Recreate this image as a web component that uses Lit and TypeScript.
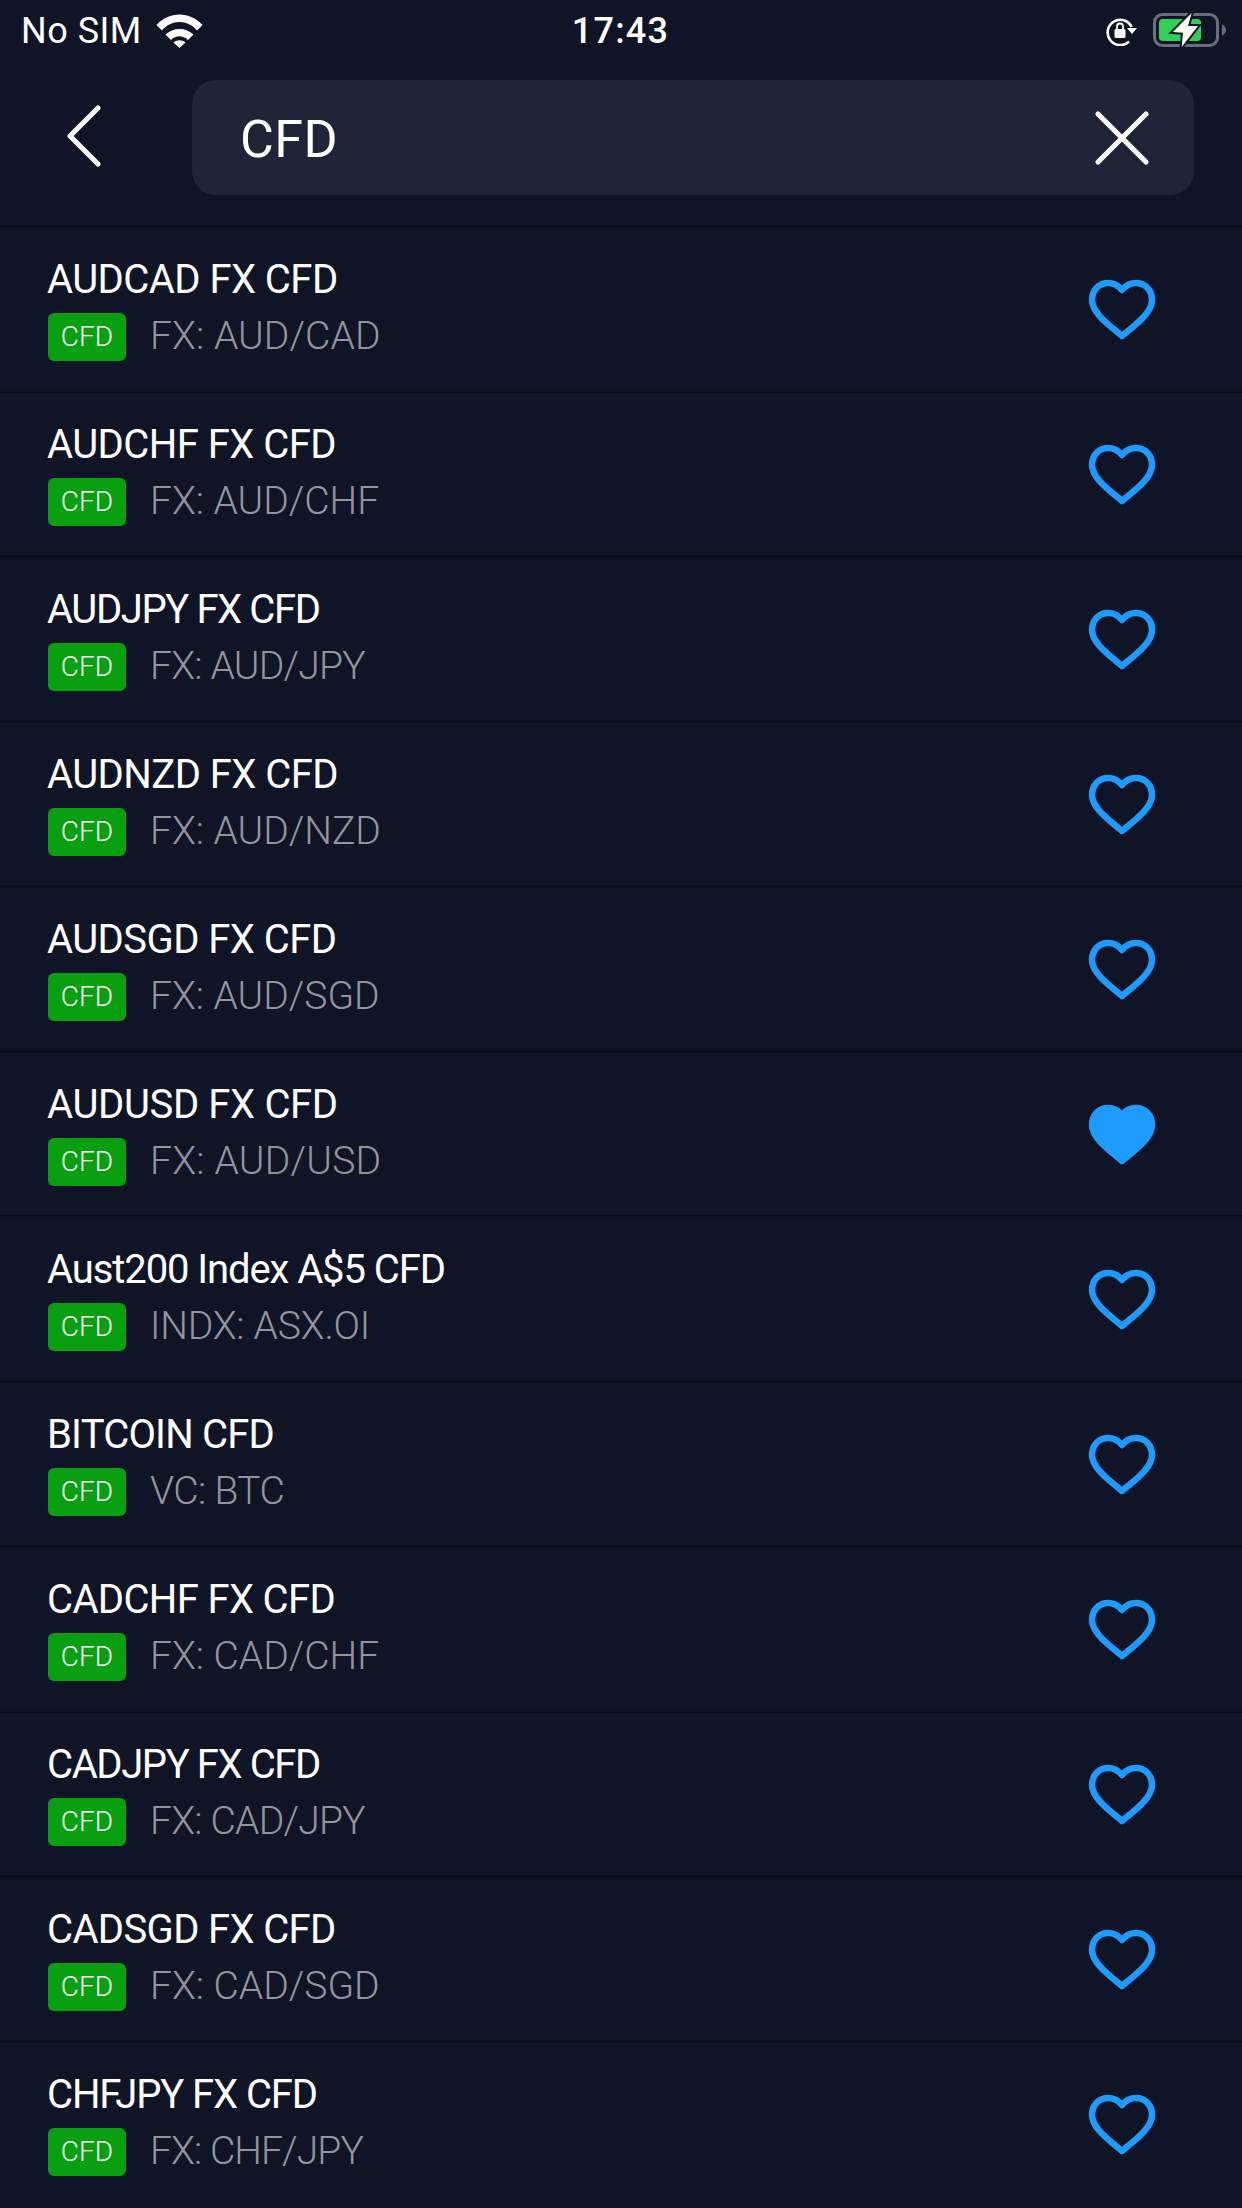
import { LitElement, css, html, svg } from 'lit';
import { customElement } from 'lit/decorators.js';

interface Instrument {
  title: string;
  sub: string;
  fav?: boolean;
  // tracking in px: the original face has a narrower J/Y and lower case than Roboto
  titleTrack?: number;
  subTrack?: number;
}

const INSTRUMENTS: Instrument[] = [
  { title: 'AUDCAD FX CFD', sub: 'FX: AUD/CAD', subTrack: 0.1 },
  { title: 'AUDCHF FX CFD', sub: 'FX: AUD/CHF' },
  { title: 'AUDJPY FX CFD', sub: 'FX: AUD/JPY', titleTrack: -1.4, subTrack: -0.75 },
  { title: 'AUDNZD FX CFD', sub: 'FX: AUD/NZD' },
  { title: 'AUDSGD FX CFD', sub: 'FX: AUD/SGD' },
  { title: 'AUDUSD FX CFD', sub: 'FX: AUD/USD', fav: true, titleTrack: -0.35, subTrack: 0.25 },
  { title: 'Aust200 Index A$5 CFD', sub: 'INDX: ASX.OI', titleTrack: -1.1, subTrack: -0.2 },
  { title: 'BITCOIN CFD', sub: 'VC: BTC', titleTrack: -0.8, subTrack: -0.6 },
  { title: 'CADCHF FX CFD', sub: 'FX: CAD/CHF', titleTrack: -0.65 },
  { title: 'CADJPY FX CFD', sub: 'FX: CAD/JPY', titleTrack: -1.4, subTrack: -0.75 },
  { title: 'CADSGD FX CFD', sub: 'FX: CAD/SGD', titleTrack: -0.65 },
  { title: 'CHFJPY FX CFD', sub: 'FX: CHF/JPY', titleTrack: -1.1, subTrack: -0.9 },
];

const HEART = 'M33 10C29 5 24 3 19 3C10 3 3 10 3 20C3 33 20 45 33 56C46 45 63 33 63 20C63 10 56 3 47 3C42 3 37 5 33 10Z';

@customElement('app-root')
export class AppRoot extends LitElement {
  static styles = css`
    :host {
      display: block;
      width: 1242px;
      height: 2208px;
      overflow: hidden;
      background: #0f1426;
      color: #fff;
      font-family: Roboto, "Liberation Sans", sans-serif;
    }

    .status {
      display: grid;
      grid-template-columns: 1fr auto 1fr;
      align-items: center;
      height: 62px;
      padding: 0 16px 0 21px;
    }

    .status-left {
      display: flex;
      align-items: center;
      gap: 14px;
      font-size: 36px;
      letter-spacing: 0.5px;
    }

    .time {
      font-size: 36px;
      font-weight: 500;
      letter-spacing: 1.2px;
      margin-left: -6px;
    }

    .status-right {
      display: flex;
      justify-content: flex-end;
      align-items: center;
      gap: 14px;
    }

    .search-bar {
      display: flex;
      align-items: center;
      height: 115px;
      margin-top: 18px;
      padding: 0 48px 0 66px;
    }

    .back {
      width: 36px;
      height: 62px;
      margin-right: 90px;
      margin-top: -4px;
    }

    .field {
      flex: 1;
      height: 115px;
      display: flex;
      align-items: center;
      justify-content: space-between;
      padding: 0 45px 0 48px;
      background: #1f2438;
      border-radius: 24px;
      font-size: 52px;
      letter-spacing: 0.4px;
    }

    .field span {
      margin-top: 3px;
    }

    .list {
      margin-top: 30px;
    }

    .row {
      display: flex;
      align-items: center;
      justify-content: space-between;
      height: 162px;
      padding: 0 87px 0 48px;
      border-top: 3px solid #0a0e1c;
    }

    .title {
      font-size: 40px;
      line-height: 44px;
      letter-spacing: -0.55px;
      margin: 0 0 11px -1px;
    }

    .meta {
      display: flex;
      align-items: center;
      gap: 24px;
    }

    .badge {
      display: flex;
      align-items: center;
      justify-content: center;
      width: 78px;
      height: 48px;
      background: #08a010;
      border-radius: 6px;
      font-size: 28px;
      font-weight: 350;
    }

    .sub {
      font-size: 39px;
      font-weight: 350;
      line-height: 44px;
      margin-top: -1px;
      color: #93969f;
    }

    .heart {
      width: 66px;
      height: 59px;
      display: block;
      overflow: visible;
    }
  `;

  private renderWifi() {
    return html`<svg width="47" height="34" viewBox="0 0 47 34">
      <path d="M0.5 11C13 -3 34 -3 46.5 11L41 16.5C32 5 15 5 6 16.5Z" fill="#fff"></path>
      <path d="M9.5 20.5C17 13 30 13 37.5 20.5L32 26C27 21 20 21 15 26Z" fill="#fff"></path>
      <path d="M17.5 28.5C21 25.5 26 25.5 29.5 28.5L23.5 34Z" fill="#fff"></path>
    </svg>`;
  }

  private renderRotationLock() {
    return html`<svg width="32" height="30" viewBox="0 0 32 30">
      <path d="M23 25.5A12.6 12.6 0 1 1 25.6 11" fill="none" stroke="#fff" stroke-width="2.6"></path>
      <path d="M21 12H31L26 18Z" fill="#fff"></path>
      <rect x="8.5" y="13" width="11" height="9" rx="1.5" fill="#fff"></rect>
      <path d="M11 13.5V10.5A3 3 0 0 1 17 10.5V13.5" fill="none" stroke="#fff" stroke-width="1.8"></path>
    </svg>`;
  }

  private renderBattery() {
    return html`<svg width="74" height="36" viewBox="0 0 74 36">
      <rect x="2.5" y="1.5" width="63" height="31" rx="8" fill="none" stroke="#6b6e7a" stroke-width="3"></rect>
      <rect x="7" y="6" width="42" height="22" rx="4" fill="#30d158"></rect>
      <path d="M70 11.5C72.5 12.5 74 14.5 74 17C74 19.5 72.5 21.5 70 22.5Z" fill="#6b6e7a"></path>
      <path d="M39.7 0L20.7 19L31 19.7L29.7 34L46 13L36 13Z" fill="#fff" stroke="#0f1426" stroke-width="4" paint-order="stroke"></path>
    </svg>`;
  }

  private renderHeart(fav: boolean) {
    return html`<svg class="heart" viewBox="0 0 66 59">
      ${svg`<path
        d=${HEART}
        fill=${fav ? '#1e9bff' : 'none'}
        stroke="#1e9bff"
        stroke-width="6.5"
        stroke-linejoin="round"
      ></path>`}
    </svg>`;
  }

  private track(px?: number) {
    return px === undefined ? '' : `letter-spacing: ${px}px`;
  }

  render() {
    return html`
      <div class="status">
        <div class="status-left"><span>No SIM</span>${this.renderWifi()}</div>
        <div class="time">17:43</div>
        <div class="status-right">${this.renderRotationLock()}${this.renderBattery()}</div>
      </div>
      <div class="search-bar">
        <svg class="back" viewBox="0 0 36 62">
          <path d="M32 3L4 31L32 59" fill="none" stroke="#fff" stroke-width="5" stroke-linecap="round" stroke-linejoin="round"></path>
        </svg>
        <div class="field">
          <span>CFD</span>
          <svg width="54" height="54" viewBox="0 0 54 54">
            <path d="M3 3L51 51M51 3L3 51" fill="none" stroke="#fff" stroke-width="5" stroke-linecap="round"></path>
          </svg>
        </div>
      </div>
      <div class="list">
        ${INSTRUMENTS.map(
          (item) => html`
            <div class="row">
              <div>
                <div class="title" style=${this.track(item.titleTrack)}>${item.title}</div>
                <div class="meta">
                  <span class="badge">CFD</span>
                  <span class="sub" style=${this.track(item.subTrack)}>${item.sub}</span>
                </div>
              </div>
              ${this.renderHeart(!!item.fav)}
            </div>
          `,
        )}
      </div>
    `;
  }
}
